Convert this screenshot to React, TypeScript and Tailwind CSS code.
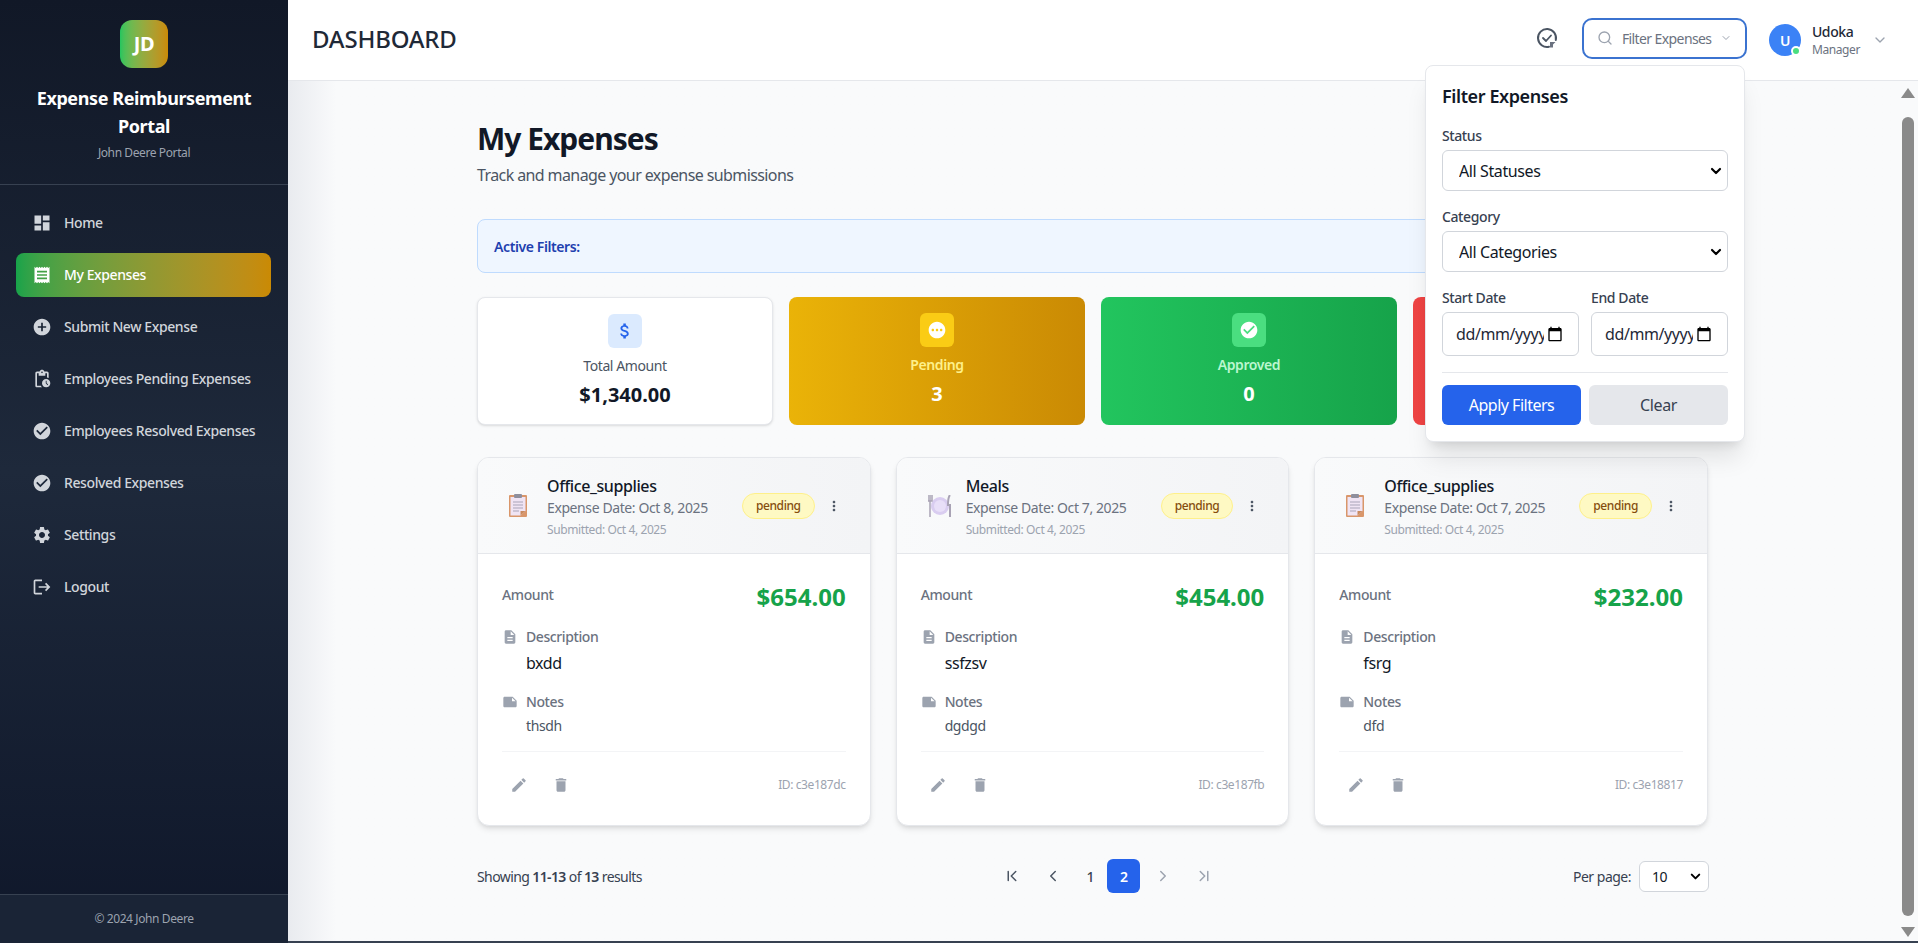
import { type ReactNode } from 'react'
import { ChevronDown, ChevronFirst, ChevronLast, ChevronLeft, ChevronRight, Search } from 'lucide-react'
import {
  MdAddCircle,
  MdAttachMoney,
  MdCalendarToday,
  MdCheckCircle,
  MdDashboard,
  MdDelete,
  MdDescription,
  MdEdit,
  MdLogout,
  MdMoreVert,
  MdNote,
  MdPending,
  MdPendingActions,
  MdReceipt,
  MdSettings,
} from 'react-icons/md'

const navItems = [
  { label: 'Home', icon: MdDashboard },
  { label: 'My Expenses', icon: MdReceipt, active: true },
  { label: 'Submit New Expense', icon: MdAddCircle },
  { label: 'Employees Pending Expenses', icon: MdPendingActions },
  { label: 'Employees Resolved Expenses', icon: MdCheckCircle },
  { label: 'Resolved Expenses', icon: MdCheckCircle },
  { label: 'Settings', icon: MdSettings },
  { label: 'Logout', icon: MdLogout },
]

const expenses = [
  { title: 'Office_supplies', kind: 'clipboard', date: 'Oct 8, 2025', amount: '$654.00', description: 'bxdd', notes: 'thsdh', id: 'c3e187dc' },
  { title: 'Meals', kind: 'meal', date: 'Oct 7, 2025', amount: '$454.00', description: 'ssfzsv', notes: 'dgdgd', id: 'c3e187fb' },
  { title: 'Office_supplies', kind: 'clipboard', date: 'Oct 7, 2025', amount: '$232.00', description: 'fsrg', notes: 'dfd', id: 'c3e18817' },
]

function ClipboardEmoji() {
  return (
    <svg width="18" height="23" viewBox="0 0 18 23">
      <rect x="0" y="1" width="18" height="22" rx="1" fill="#d9966a" />
      <path d="M1.5 3h15v14l-5 4.500h-10z" fill="#f0e4f4" />
      <path d="M11.500 21.500l5-4.500h-5z" fill="#c98a5e" />
      <rect x="5" y="0" width="8" height="4" rx="1" fill="#8f8f9d" />
      <path d="M4 8h10M4 11h10M4 14h10M4 17h6" stroke="#a9a4b8" strokeWidth="1" />
    </svg>
  )
}

function MealEmoji() {
  return (
    <svg width="24" height="22" viewBox="0 0 24 22">
      <circle cx="12" cy="11" r="9" fill="#d9cdf0" />
      <circle cx="12" cy="11" r="6" fill="#e8dff8" />
      <path d="M2 0v7M0 0v6h4V0M2 6v16" stroke="#a9a3b5" strokeWidth="1.500" fill="none" />
      <path d="M22 0c-2 2-2 7-2 10h2v12" stroke="#a9a3b5" strokeWidth="2" fill="none" />
    </svg>
  )
}

function TaskBadgeIcon() {
  return (
    <svg width="24" height="24" viewBox="0 0 24 24" fill="none" stroke="#4b5563" strokeWidth="2">
      <path d="M14 20.800A9 9 0 1 1 20.800 14" strokeLinecap="round" />
      <path d="M8 12l3 3 5-5.500" strokeWidth="1.800" strokeLinecap="round" strokeLinejoin="round" />
      <path d="M15 16h5.500l-2.500 2.500v3h-3z" fill="#6b7280" stroke="none" />
    </svg>
  )
}

function Label({ children }: { children: ReactNode }) {
  return <label className="mb-1 block text-[14px] leading-5 font-medium text-[#374151]">{children}</label>
}

function FilterSelect({ value }: { value: string }) {
  return (
    <div className="relative mb-4">
      <select className="h-[41px] w-full appearance-none rounded-[6px] border border-[#d1d5db] bg-white px-[16px] text-[16px] text-[#111827]">
        <option>{value}</option>
      </select>
      <ChevronDown strokeWidth={3.2} className="pointer-events-none absolute top-[13px] right-[4px] h-[16px] w-[16px] text-black" />
    </div>
  )
}

function DateField() {
  return (
    <div className="flex h-[44px] items-center rounded-[6px] border border-[#d1d5db] bg-white pr-[15px] pl-[13px] text-[16px] text-[#1f2937]">
      <span className="w-[88px] overflow-hidden whitespace-nowrap">dd/mm/yyyy</span>
      <MdCalendarToday className="ml-auto h-[16px] w-[16px] shrink-0 text-black" />
    </div>
  )
}

function FilterPanel() {
  return (
    <div className="absolute top-[65px] right-[173px] z-20 w-[320px] rounded-[8px] border border-[#e5e7eb] bg-white p-4 shadow-xl">
      <h3 className="mb-[16px] text-[18px] leading-7 font-semibold text-[#111827]">Filter Expenses</h3>
      <Label>Status</Label>
      <FilterSelect value="All Statuses" />
      <Label>Category</Label>
      <FilterSelect value="All Categories" />
      <div className="grid grid-cols-2 gap-3">
        <div>
          <Label>Start Date</Label>
          <DateField />
        </div>
        <div>
          <Label>End Date</Label>
          <DateField />
        </div>
      </div>
      <div className="mt-4 flex gap-2 border-t border-[#e5e7eb] pt-3">
        <button className="h-[40px] flex-1 rounded-[6px] bg-[#2563eb] text-[16px] tracking-[-0.5px] text-white">Apply Filters</button>
        <button className="h-[40px] flex-1 rounded-[6px] bg-[#e5e7eb] text-[16px] text-[#374151]">Clear</button>
      </div>
    </div>
  )
}

function Sidebar() {
  return (
    <aside className="flex h-full w-[288px] shrink-0 flex-col bg-gradient-to-b from-[#111827] via-[#1e293b] to-[#0f172a]">
      <div className="flex h-[185px] flex-col items-center border-b border-[#374151] pt-[20px]">
        <div className="flex h-[48px] w-[48px] items-center justify-center rounded-[12px] bg-gradient-to-r from-[#22c55e] to-[#ca8a04] text-[20px] font-bold text-white">JD</div>
        <h1 className="mt-[16px] w-[240px] text-center text-[18px] leading-7 font-bold text-white">Expense Reimbursement Portal</h1>
        <p className="mt-[5px] text-[12px] leading-4 text-[#9ca3af]">John Deere Portal</p>
      </div>
      <nav className="flex flex-1 flex-col gap-[8px] pt-[16px] pr-[17px] pl-4">
        {navItems.map((item) => (
          <div
            key={item.label}
            className={`flex h-[44px] items-center gap-[12px] rounded-[8px] px-[16px] text-[14px] font-medium whitespace-nowrap ${
              item.active ? 'bg-gradient-to-r from-[#16a34a] to-[#ca8a04] text-white' : 'text-[#d1d5db]'
            }`}
          >
            <item.icon className="h-[20px] w-[20px] shrink-0" />
            <span className="-mt-[1px]">{item.label}</span>
          </div>
        ))}
      </nav>
      <div className="flex h-[49px] items-center justify-center border-t border-[#374151] bg-[#1a2436] text-[12px] text-[#9ca3af]">© 2024 John Deere</div>
    </aside>
  )
}

function Header() {
  return (
    <header className="flex h-[81px] shrink-0 items-center border-b border-[#e5e7eb] bg-white pr-[30px] pl-[24px]">
      <h2 className="-mt-[2px] text-[24px] font-medium tracking-[-0.2px] text-[#1f2937]">DASHBOARD</h2>
      <div className="ml-auto flex items-center">
        <div className="-mt-[4px] mr-[23px]"><TaskBadgeIcon /></div>
        <div className="-mt-[4px] flex h-[41px] w-[165px] items-center rounded-[10px] border-2 border-[#3b73d0] px-[13px] text-[14px] tracking-[-0.6px] whitespace-nowrap text-[#6b7280]">
          <Search className="mr-[9px] h-[16px] w-[16px] shrink-0 text-[#9ca3af]" />
          <span>Filter Expenses</span>
          <ChevronDown className="ml-auto h-[12px] w-[12px] shrink-0 text-[#9ca3af]" />
        </div>
        <div className="relative ml-[22px] flex h-[32px] w-[32px] items-center justify-center rounded-full bg-[#3b82f6] text-[14px] font-semibold text-white">
          U
          <span className="absolute right-0 bottom-0 h-[10px] w-[10px] rounded-full border-2 border-white bg-[#4ade80]" />
        </div>
        <div className="ml-[11px] flex flex-col">
          <span className="-mt-[1px] text-[14px] leading-5 font-medium text-[#1f2937]">Udoka</span>
          <span className="text-[12px] leading-4 text-[#6b7280]">Manager</span>
        </div>
        <ChevronDown className="ml-[12px] h-[16px] w-[16px] text-[#9ca3af]" />
      </div>
    </header>
  )
}

function StatCard({ icon, label, value, className, tile, labelClass, valueClass }: { icon: ReactNode; label: string; value: string; className: string; tile: string; labelClass: string; valueClass: string }) {
  return (
    <div className={`flex h-[128px] flex-col items-center rounded-[8px] pt-[16px] ${className}`}>
      <div className={`flex h-[34px] w-[34px] items-center justify-center rounded-[6px] ${tile}`}>{icon}</div>
      <div className={`mt-[8px] text-[14px] leading-5 ${labelClass}`}>{label}</div>
      <div className={`mt-[5px] text-[20px] leading-7 font-bold tracking-normal ${valueClass}`}>{value}</div>
    </div>
  )
}

function ExpenseCard({ expense }: { expense: (typeof expenses)[number] }) {
  return (
    <div className="overflow-hidden rounded-[12px] border border-[#e5e7eb] bg-white shadow-md">
      <div className="flex h-[96px] items-center border-b border-[#e5e7eb] bg-gradient-to-r from-[#f9fafb] to-[#f3f4f6] pr-[28px] pl-[28px]">
        <div className="flex w-[41px] shrink-0 items-center pl-[3px]">{expense.kind === 'meal' ? <MealEmoji /> : <ClipboardEmoji />}</div>
        <div className="min-w-0 flex-1 pt-[1px]">
          <div className="text-[16px] leading-6 font-medium text-[#111827]">{expense.title}</div>
          <div className="text-[14px] leading-5 text-[#6b7280]">Expense Date: {expense.date}</div>
          <div className="mt-[4px] text-[12px] leading-4 text-[#9ca3af]">Submitted: Oct 4, 2025</div>
        </div>
        <span className="flex h-[26px] items-center rounded-full border border-[#fef08a] bg-[#fef9c3] px-[13px] text-[12px] font-medium text-[#854d0e]">pending</span>
        <MdMoreVert className="ml-[11px] h-[16px] w-[16px] text-[#4b5563]" />
      </div>
      <div className="px-[24px] pt-[31px]">
        <div className="flex items-start justify-between">
          <span className="text-[14px] leading-5 font-medium text-[#6b7280]">Amount</span>
          <span className="-mt-[4px] text-[24px] leading-8 font-bold tracking-normal text-[#16a34a]">{expense.amount}</span>
        </div>
        <div className="mt-[14px] flex items-center gap-[8px] text-[14px] leading-5 font-medium text-[#6b7280]">
          <MdDescription className="h-[16px] w-[16px] text-[#9ca3af]" />
          Description
        </div>
        <div className="mt-[4px] pl-[24px] text-[16px] leading-6 text-[#111827]">{expense.description}</div>
        <div className="mt-[17px] flex items-center gap-[8px] text-[14px] leading-5 font-medium text-[#6b7280]">
          <MdNote className="h-[16px] w-[16px] text-[#9ca3af]" />
          Notes
        </div>
        <div className="mt-[4px] pl-[24px] text-[14px] leading-5 text-[#4b5563]">{expense.notes}</div>
        <div className="mt-[15px] flex h-[74px] items-center border-t border-[#f3f4f6] pb-[8px]">
          <MdEdit className="ml-[8px] h-[18px] w-[18px] text-[#9ca3af]" />
          <MdDelete className="ml-[24px] h-[18px] w-[18px] text-[#9ca3af]" />
          <span className="ml-auto text-[12px] text-[#9ca3af]">ID: {expense.id}</span>
        </div>
      </div>
    </div>
  )
}

function Pagination() {
  return (
    <div className="mt-[33px] flex h-[34px] items-center justify-between">
      <div className="text-[14px] tracking-[-0.6px] text-[#374151]">
        Showing <span className="font-semibold">11-13</span> of <span className="font-semibold">13</span> results
      </div>
      <div className="flex items-center gap-[1px]">
        <span className="flex h-[34px] w-[40px] items-center justify-center text-[#4b5563]"><ChevronFirst className="h-[18px] w-[18px]" /></span>
        <span className="flex h-[34px] w-[40px] items-center justify-center text-[#4b5563]"><ChevronLeft className="h-[18px] w-[18px]" /></span>
        <span className="flex h-[34px] w-[32px] items-center justify-center text-[14px] font-medium text-[#374151]">1</span>
        <span className="flex h-[34px] w-[33px] items-center justify-center rounded-[6px] bg-[#2563eb] text-[14px] font-semibold text-white">2</span>
        <span className="flex h-[34px] w-[44px] items-center justify-center text-[#9ca3af]"><ChevronRight className="h-[18px] w-[18px]" /></span>
        <span className="flex h-[34px] w-[36px] items-center justify-center text-[#9ca3af]"><ChevronLast className="h-[18px] w-[18px]" /></span>
      </div>
      <div className="flex items-center gap-[8px] text-[14px] tracking-[-0.5px] text-[#374151]">
        Per page:
        <div className="relative">
          <select className="h-[31px] w-[70px] appearance-none rounded-[6px] border border-[#d1d5db] bg-white px-[12px] text-[14px] text-[#111827]">
            <option>10</option>
          </select>
          <ChevronDown strokeWidth={3.2} className="pointer-events-none absolute top-[8px] right-[6px] h-[15px] w-[15px] text-black" />
        </div>
      </div>
    </div>
  )
}

function Scrollbar() {
  return (
    <div className="flex w-[20px] shrink-0 flex-col items-center bg-[#f9fafb] pt-[7px] pb-[4px]">
      <div className="h-0 w-0 border-x-[7px] border-b-[10px] border-x-transparent border-b-[#8a8a8a]" />
      <div className="mt-[19px] w-[12px] flex-1 rounded-full bg-[#8a8a8a]" />
      <div className="mt-[11px] h-0 w-0 border-x-[7px] border-t-[10px] border-x-transparent border-t-[#8a8a8a]" />
    </div>
  )
}

export default function App() {
  return (
    <div className="relative flex h-[943px] overflow-hidden bg-[#f9fafb] font-['Noto_Sans',sans-serif] tracking-[-0.4px]">
      <Sidebar />
      <div className="flex min-w-0 flex-1 flex-col border-b-2 border-[#374151]">
        <Header />
        <div className="flex min-h-0 flex-1">
          <main className="min-w-0 flex-1 bg-gradient-to-r from-[#e9ebef] via-[#f9fafb] via-[3%] to-[#f9fafb]">
            <div className="mx-auto max-w-[1280px] px-6 pt-[40px]">
              <h2 className="text-[30px] leading-9 font-bold tracking-[-1px] text-[#111827]">My Expenses</h2>
              <p className="mt-[6px] text-[16px] leading-6 tracking-[-0.6px] text-[#4b5563]">Track and manage your expense submissions</p>
              <div className="mt-[32px] flex h-[54px] items-center rounded-[8px] border border-[#bfdbfe] bg-[#eff6ff] px-4 text-[14px] font-semibold text-[#1e40af]">Active Filters:</div>
              <div className="mt-[24px] grid grid-cols-4 gap-4">
                <StatCard
                  className="border border-[#e5e7eb] bg-white shadow-sm"
                  tile="bg-[#dbeafe]"
                  icon={<MdAttachMoney className="h-[20px] w-[20px] text-[#2563eb]" />}
                  label="Total Amount"
                  labelClass="text-[#4b5563]"
                  value="$1,340.00"
                  valueClass="text-[#111827]"
                />
                <StatCard
                  className="bg-gradient-to-r from-[#eab308] to-[#ca8a04]"
                  tile="bg-[#facc15]"
                  icon={<MdPending className="h-[20px] w-[20px] text-white" />}
                  label="Pending"
                  labelClass="font-semibold text-[#fef08a]"
                  value="3"
                  valueClass="text-white"
                />
                <StatCard
                  className="bg-gradient-to-r from-[#22c55e] to-[#16a34a]"
                  tile="bg-[#4ade80]"
                  icon={<MdCheckCircle className="h-[20px] w-[20px] text-white" />}
                  label="Approved"
                  labelClass="font-semibold text-[#bbf7d0]"
                  value="0"
                  valueClass="text-white"
                />
                <StatCard
                  className="bg-gradient-to-r from-[#ef4444] to-[#dc2626]"
                  tile="bg-[#f87171]"
                  icon={<MdCheckCircle className="h-[20px] w-[20px] text-white" />}
                  label="Rejected"
                  labelClass="font-semibold text-[#fecaca]"
                  value="0"
                  valueClass="text-white"
                />
              </div>
              <div className="mt-[32px] mr-[1px] grid grid-cols-3 gap-[25px]">
                {expenses.map((expense) => (
                  <ExpenseCard key={expense.id} expense={expense} />
                ))}
              </div>
              <Pagination />
            </div>
          </main>
          <Scrollbar />
        </div>
      </div>
      <FilterPanel />
    </div>
  )
}
